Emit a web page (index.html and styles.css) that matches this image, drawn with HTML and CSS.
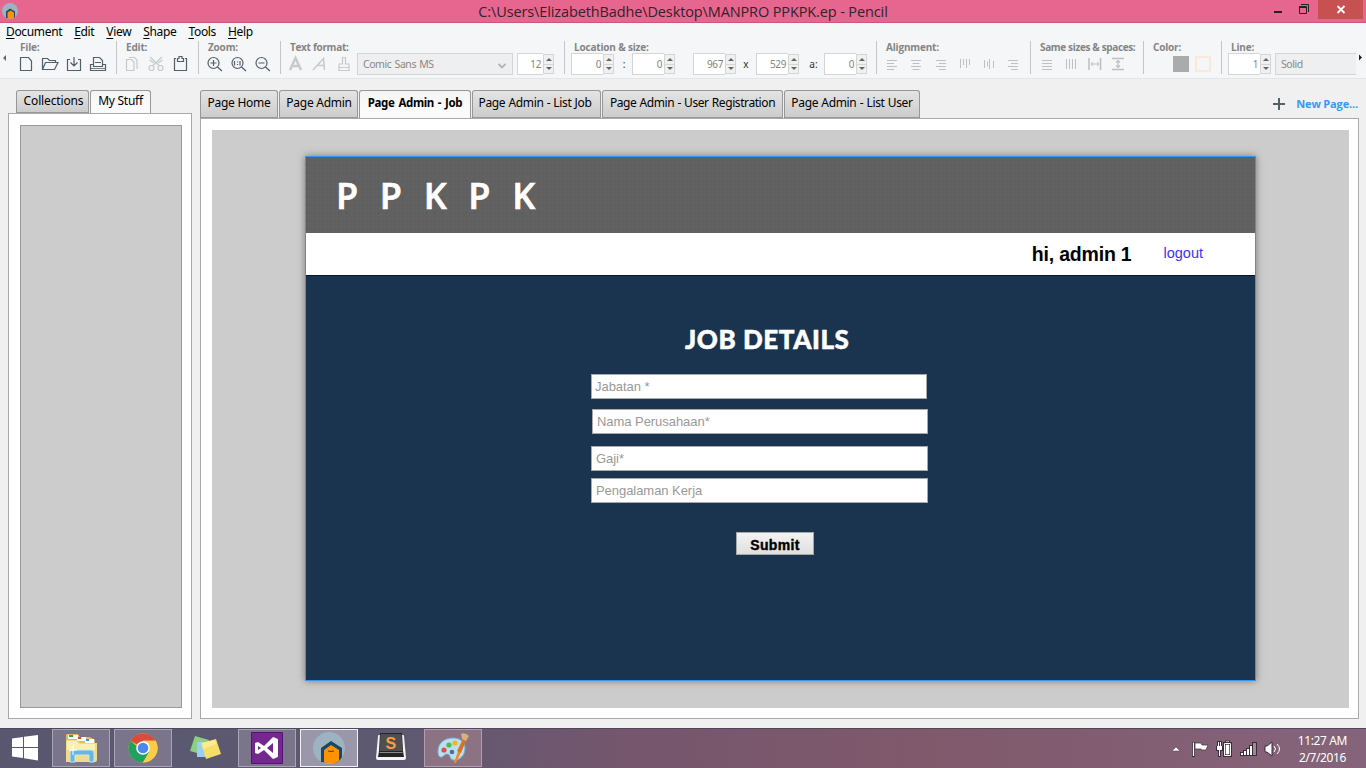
FILE: index.html
```
<!DOCTYPE html>
<html lang="en">
<head>
<meta charset="utf-8">
<title>Pencil</title>
<link rel="stylesheet" href="styles.css">
</head>
<body>
<div class="desktop">
<header class="titlebar">
  <svg class="app-icon" viewBox="0 0 32 32"><circle cx="16" cy="16" r="16" fill="#9db3c2"/><path d="M8 30V17l8-6 10 6v12" fill="#174868"/><path d="M11 29V19l6-4 7 4v10q-6 5-13 0z" fill="#ff9200"/></svg>
  <h1 class="window-title">C:\Users\ElizabethBadhe\Desktop\MANPRO PPKPK.ep - Pencil</h1>
  <div class="win-buttons">
    <svg class="win-min" width="26" height="19" viewBox="0 0 26 19"><path d="M8 12h8" stroke="#222" stroke-width="2"/></svg>
    <svg class="win-max" width="26" height="19" viewBox="0 0 26 19"><path d="M7.500 6.500h7v7h-7zM7 7.500h8M9 4.500h7.500V12" fill="none" stroke="#222"/></svg>
    <span class="win-close"><svg width="45" height="19" viewBox="0 0 45 19"><path d="M19.500 6l7 7M26.500 6l-7 7" stroke="#fff" stroke-width="1.800"/></svg></span>
  </div>
</header>
<nav class="menubar"><span><u>D</u>ocument</span><span><u>E</u>dit</span><span><u>V</u>iew</span><span><u>S</u>hape</span><span><u>T</u>ools</span><span><u>H</u>elp</span></nav>
<section class="toolbar">
  <svg class="scroll-arrow" width="8" height="33" viewBox="0 0 8 33"><path d="M6 14v6l-3-3z" fill="#666"/></svg>
  <div class="group g-file"><b>File:</b><div class="row">
    <svg class="ic"><path d="M6.500 5.500h8l3 3.500v9.500h-11z"/></svg>
    <svg class="ic"><path d="M4.500 17V6.500h5l2 2h6v2M4.500 17.500l3-7h12.500l-3.500 7z"/></svg>
    <svg class="ic"><path d="M8 7.500H5.500v11h13v-11H16M12 5v9M8.500 10.500L12 14l3.500-3.500"/></svg>
    <svg class="ic"><path d="M7.500 13V5.500h6l3 3V13M9 10.500h6M4.500 18.500v-6h3v2h9v-2h3v6z"/><path d="M5 16.500h14" stroke-width=".8"/></svg>
  </div></div>
  <div class="group g-edit"><b>Edit:</b><div class="row">
    <svg class="ic dim"><path d="M6.500 7.500h5l2.500 2.500v8.500H6.500zM9 5.500h5.500l2.500 2.500V17"/></svg>
    <svg class="ic dim"><path d="M6 5l9.500 9M18 5l-9.500 9M5.500 8l4.500 3M18.500 8l-4.500 3"/><circle cx="7.500" cy="16" r="2.500"/><circle cx="16.500" cy="16" r="2.500"/></svg>
    <svg class="ic"><path d="M8 6.500H6.500v12h12v-12H17M9.500 9.500h6v-3h-1.500V4.500h-3v2H9.500z"/></svg>
  </div></div>
  <div class="group g-zoom"><b>Zoom:</b><div class="row">
    <svg class="ic"><circle cx="10.500" cy="11" r="5.500"/><path d="M14.500 15l4.500 4M7.500 11h6M10.500 8v6"/></svg>
    <svg class="ic"><circle cx="10.500" cy="11" r="5.500"/><path d="M14.500 15l4.500 4M7.500 9v4.500M13 9v4.500M10.500 9.500v1M10.500 12v1"/></svg>
    <svg class="ic"><circle cx="10.500" cy="11" r="5.500"/><path d="M14.500 15l4.500 4M7.500 11h6"/></svg>
  </div></div>
  <div class="group g-text"><b>Text format:</b><div class="row">
    <svg class="ic dim"><path d="M6 18l5.500-12L17 18M8.500 14h6" stroke-width="2.500"/></svg>
    <svg class="ic dim"><path d="M5 18L15.500 6.500 16.500 18M10 13.500h6.500" stroke-width="1.500"/></svg>
    <svg class="ic dim"><path d="M10.500 12V5.500h3V12h3.500v6.500H7V12zM7 15.500h10"/></svg>
    <div class="select font-select">Comic Sans MS<svg width="10" height="8" viewBox="0 0 10 8"><path d="M1.500 2l3.500 3.500L8.500 2" fill="none" stroke="#b4b4b4" stroke-width="1.800"/></svg></div>
    <div class="spin size-spin"><span>12</span><i></i></div>
  </div></div>
  <div class="group g-loc"><b>Location &amp; size:</b><div class="row">
    <div class="spin"><span>0</span><i></i></div><em class="colon">:</em>
    <div class="spin"><span>0</span><i></i></div>
    <div class="spin w-spin"><span>967</span><i></i></div><em class="times">x</em>
    <div class="spin"><span>529</span><i></i></div><em class="angle">a:</em>
    <div class="spin"><span>0</span><i></i></div>
  </div></div>
  <div class="group g-align"><b>Alignment:</b><div class="row">
    <svg class="ic pale"><path d="M7 8.500h10M7 11.500h7M7 14.500h10M7 17.500h7"/></svg>
    <svg class="ic pale"><path d="M7 8.500h10M8.500 11.500h7M7 14.500h10M8.500 17.500h7"/></svg>
    <svg class="ic pale"><path d="M8 8.500h10M11 11.500h7M8 14.500h10M11 17.500h7"/></svg>
    <svg class="ic pale"><path d="M8.500 7v9M11.500 7v6M14.500 7v9M17.500 7v6"/></svg>
    <svg class="ic pale"><path d="M8.500 8v8M11.500 9.500v5M13.500 7v10M17.500 9v7"/></svg>
    <svg class="ic pale"><path d="M8 8.500h10M11 11.500h7M8 14.500h10M11 17.500h7"/></svg>
  </div></div>
  <div class="group g-same"><b>Same sizes &amp; spaces:</b><div class="row">
    <svg class="ic pale"><path d="M7 8.500h10M7 11.500h10M7 14.500h10M7 17.500h10"/></svg>
    <svg class="ic pale"><path d="M7.500 7v10M10.500 7v10M13.500 7v10M16.500 7v10"/></svg>
    <svg class="ic pale"><path d="M6 6v12M17.500 6v12" stroke-width="1.600"/><path d="M8 12h8M10 10l-2 2 2 2M14 10l2 2-2 2"/></svg>
    <svg class="ic pale"><path d="M5 6.500h12M5 17.500h12" stroke-width="1.600"/><path d="M11 8v8M9 10.500l2-2 2 2M9 13.500l2 2 2-2" stroke-width="1.200"/></svg>
  </div></div>
  <div class="group g-color"><b>Color:</b><div class="row"><span class="swatch fill"></span><span class="swatch stroke"></span></div></div>
  <div class="group g-line"><b>Line:</b><div class="row"><div class="spin"><span>1</span><i></i></div><div class="select line-select">Solid</div></div></div>
  <svg class="scroll-arrow" width="8" height="33" viewBox="0 0 8 33"><path d="M1 13.500v6l3-3z" fill="#222"/></svg>
</section>
<main class="workspace">
  <aside class="sidebar">
    <div class="tabs"><span class="tab t-coll">Collections</span><span class="tab t-stuff on">My Stuff</span></div>
    <div class="panel"><div class="shape-list"></div></div>
  </aside>
  <section class="editor">
    <div class="tabs">
      <span class="tab p1">Page Home</span><span class="tab p2">Page Admin</span><span class="tab p3 on">Page Admin - Job</span><span class="tab p4">Page Admin - List Job</span><span class="tab p5">Page Admin - User Registration</span><span class="tab p6">Page Admin - List User</span>
      <span class="new-page"><svg width="12" height="12" viewBox="0 0 12 12"><path d="M6 0v12M0 6h12" stroke="#52606a" stroke-width="2"/></svg><span>New Page...</span></span>
    </div>
    <div class="panel"><div class="canvas"><article class="page">
      <header class="page-head">PPKPK</header>
      <div class="userbar"><strong>hi, admin 1</strong><a>logout</a></div>
      <form class="job-form">
        <h2>JOB DETAILS</h2>
        <div class="field f1">Jabatan *</div>
        <div class="field f2">Nama Perusahaan*</div>
        <div class="field f3">Gaji*</div>
        <div class="field f4">Pengalaman Kerja</div>
        <div class="submit">Submit</div>
      </form>
    </article></div></div>
  </section>
</main>
<footer class="taskbar">
  <div class="task start"><svg width="28" height="28" viewBox="0 0 28 28"><path d="M1 4.500l11-1.500V13H1zM13 2.800L27 1v12H13zM1 14h11v10L1 22.500zM13 14h14v12.500l-14-2.300z" fill="#fff"/></svg></div>
  <div class="task open"><svg width="36" height="34" viewBox="0 0 36 34"><path d="M3 9V4q0-1 1-1h11l2 3h10l5 3v21H3z" fill="#d8bd63"/><path d="M5 4h10v4H5z" fill="#fff"/><path d="M6 4h4v2H6z" fill="#1fae3c"/><path d="M14 6h9v4h-9z" fill="#fff"/><path d="M15 6h3v2h-3z" fill="#d8452c"/><path d="M22 8h9v4h-9z" fill="#fff"/><path d="M23 8h3v2h-3z" fill="#3199e8"/><path d="M3 9h11l3 3h17v17q0 2-2 2H3z" fill="#f0db88"/><path d="M4 10h9l3 3h16v6H4z" fill="#fbf0b0"/><path d="M7 31V22q0-3 3-3h18q3 0 3 3v9h-5v-7H12v7z" fill="#69b5dd" stroke="#c3e9f9"/><path d="M10 14v10M6 19h8" stroke="#fff"/></svg></div>
  <div class="task open"><svg width="30" height="30" viewBox="0 0 30 30"><circle cx="15" cy="15" r="14.500" fill="#f8c63e"/><path d="M15 15L2.400 7.700A14.500 14.500 0 0 1 27.600 7.700H15z" fill="#d94b3d"/><path d="M2.400 7.700A14.500 14.500 0 0 0 15 29.500l6.300-10.900H15z" fill="#20a15f"/><path d="M27.600 7.700H15v7.300l6.300 3.600L15 29.500A14.500 14.500 0 0 0 27.600 7.700z" fill="#fccb47"/><circle cx="15" cy="15" r="6.800" fill="#fff"/><circle cx="15" cy="15" r="5.300" fill="#4a87ee"/></svg></div>
  <div class="task"><svg width="34" height="28" viewBox="0 0 34 28"><path d="M7 2l14 4-5 15-14-4z" fill="#8bcf87"/><path d="M9 8h13v15H9z" fill="#98cff6"/><path d="M13 9l15-4 5 15-15 5z" fill="#f5df67"/><path d="M14 9l13-3 1 4-13 5z" fill="#fbeb91"/></svg></div>
  <div class="task open"><svg width="32" height="32" viewBox="0 0 32 32"><path d="M.5.500h31v31H.500z" fill="#74278f" stroke="#551370"/><path d="M4 11l3-1 6 4 9-9 5 2v18l-5 2-9-9-6 4-3-1zM22 11l-6 5 6 5zM7 14v4l3-2z" fill="#fff" fill-rule="evenodd"/></svg></div>
  <div class="task open active"><svg width="32" height="32" viewBox="0 0 32 32"><circle cx="16" cy="16" r="16" fill="#9db3c2"/><path d="M8 30V16l10-7 11 7v9q-4 7-10 6z" fill="#174868"/><path d="M11 30V18l7-5 8 5v11q-7 5-15 1z" fill="#ff9200"/><path d="M15 19q3 1 6 0" fill="none" stroke="#174868"/></svg></div>
  <div class="task"><svg class="key" width="32" height="28" viewBox="0 0 32 28"><path d="M3 3q0-1 1-1h24q1 0 1 1l2 22q0 2-2 2H3q-2 0-2-2z" fill="#f4f4f4"/><path d="M5 0h22l1 18 1 6H3l1-6z" fill="#242424"/><path d="M5.500 1h21l1 17H4.500z" fill="#4f4f4f"/><path d="M4.500 19.500h23" stroke="#8a8a8a"/><text x="10.500" y="16" class="sublime">S</text></svg></div>
  <div class="task open warm"><svg width="34" height="32" viewBox="0 0 34 32"><path d="M2 19C2 10 10 6 17 6c7 0 12 4 12 10 0 8-6 13-12 12-4-1-2-6-6-6-3 0-4 4-7 3-2-1-2-4-2-6z" fill="#b9dff3" stroke="#78afd0"/><circle cx="8" cy="18" r="2.600" fill="#e74d47"/><circle cx="13" cy="13" r="2.600" fill="#52b749"/><circle cx="19" cy="11" r="2.600" fill="#f3b526"/><circle cx="16" cy="20" r="2.300" fill="#50708d"/><path d="M18 31l4-12 3 1-5 11z" fill="#f18a26"/><path d="M21 19l6-12 3 2-5 12z" fill="#d87324"/><path d="M25 2q4-2 8 2l-3 5-4-2z" fill="#d5b27a"/></svg></div>
  <div class="tray">
    <svg width="112" height="20" viewBox="0 0 112 20"><path d="M1 12l4-4 4 4z" fill="#fff" stroke="#544052" stroke-width=".5"/>
    <path d="M22.500 3v15" stroke="#3d2b3b" stroke-width="3"/><path d="M22.500 3.500v13.500" stroke="#fff" stroke-width="1.300"/>
    <path d="M24 4h6l1 2h6l-2 5h-4l-1-1h-6z" fill="#fff" stroke="#3d2b3b" stroke-width=".7"/>
    <path d="M46 2v5h-1v5h2v6h3v-6h2V7h-1V2z" fill="#3d2b3b"/><path d="M47 3h1v4h1V3h1v4h1v4h-2v6h-1v-6h-2V7h1z" fill="#fff"/>
    <path d="M52 3h2V1.500h5V3h2v15h-9z" fill="#3d2b3b"/><path d="M53.500 4.500h6v12h-6z" fill="none" stroke="#fff"/><path d="M55 2.500h3M55 6h3v9h-3z" fill="#fff" stroke="#fff" stroke-width=".6"/>
    <path d="M69 17v-4h3v-2h3V9h3V6h3V3h5v14z" fill="#3d2b3b"/><path d="M70 14h2v2h-2zM73 12h2v4h-2zM76 10h2v6h-2zM79 7h2v9h-2z" fill="#fff"/><path d="M82 4h3v12h-3z" fill="#9c8a98"/>
    <path d="M94 7h2l5-4v14l-5-4h-2z" fill="#fff" stroke="#3d2b3b"/><path d="M103 7q3 3 0 6M106 5q5 5 0 10" fill="none" stroke="#fff"/></svg>
    <div class="clock">11:27 AM<br>2/7/2016</div>
  </div>
</footer>
</div>
</body>
</html>
```
FILE: styles.css
```
* { box-sizing: border-box; }
body { margin: 0; overflow: hidden; background: #f0f0f0; font-family: "Noto Sans", "Open Sans", sans-serif; color: #000; }
h1, h2 { margin: 0; }
svg { display: block; flex: none; }
.desktop { width: 1366px; height: 768px; display: flex; flex-direction: column; }

.titlebar { height: 23px; flex: none; display: grid; grid-template-columns: 140px 1fr 140px; background: #e7668f; border-bottom: 1px solid #c9587b; }
.app-icon { width: 16px; height: 16px; margin: 3px 0 0 2px; }
.window-title { font: 400 14.5px/23px "Open Sans", sans-serif; text-align: center; color: #33222a; white-space: nowrap; letter-spacing: -.12px; }
.win-buttons { display: flex; justify-content: flex-end; padding-right: 3px; }
.win-close { height: 19px; background: #c75050; }

.menubar { height: 18px; flex: none; display: flex; gap: 12px; padding-left: 6px; background: #f5f6f8; font: 12px/18px "Noto Sans", sans-serif; letter-spacing: -.34px; }
.menubar u { text-underline-offset: 2px; }

.toolbar { height: 38px; flex: none; display: flex; background: #f5f6f8; border-bottom: 1px solid #e3e6e9; }
.group { height: 33px; flex: none; border-right: 1px solid #c3c6c8; color: #858585; }
.group b { display: block; height: 12px; font: 700 10px/13px "Open Sans", sans-serif; letter-spacing: -.18px; white-space: nowrap; }
.row { display: flex; height: 22px; align-items: center; }
.g-file { width: 109px; } .g-file b { margin-left: 12px; } .g-file .row { padding-left: 6px; }
.g-edit { width: 82px; } .g-edit b { margin-left: 9px; } .g-edit .row { padding-left: 3px; }
.g-zoom { width: 82px; } .g-zoom b { margin-left: 9px; } .g-zoom .row { padding-left: 4px; }
.g-text { width: 284px; } .g-text b { margin-left: 9px; letter-spacing: -.3px; } .g-text .row { padding-left: 3px; }
.g-loc { width: 312px; } .g-loc b { margin-left: 9px; } .g-loc .row { padding-left: 6px; }
.g-align { width: 154px; } .g-align b { margin-left: 9px; } .g-align .row { padding-left: 3px; }
.g-same { width: 113px; } .g-same b { margin-left: 9px; letter-spacing: -.36px; } .g-same .row { padding-left: 4px; }
.g-color { width: 78px; } .g-color b { margin-left: 9px; } .g-color .row { padding-left: 29px; gap: 6px; }
.g-line { width: 136px; border-right: 0; } .g-line b { margin-left: 9px; } .g-line .row { padding-left: 6px; }
.ic { width: 24px; height: 24px; fill: none; stroke: #52606a; stroke-width: 1.2; }
.dim { stroke: #c8c9ca; }
.pale { stroke: #bfc0c2; stroke-width: 1; }
.select { height: 22px; display: flex; align-items: center; justify-content: space-between; padding: 0 5px; border: 1px solid #d5d5d5; background: #efefef; color: #888; font: 10.5px "Noto Sans", sans-serif; letter-spacing: -.45px; word-spacing: 1px; }
.font-select { width: 156px; margin-left: 1px; }
.font-select svg { margin-top: 3px; }
.line-select { width: 81px; margin-left: 4px; border-right: 0; }
.spin { width: 38px; height: 22px; flex: none; display: flex; }
.spin span { width: 26px; padding-right: 2px; border: 1px solid #d5d5d5; border-right: 0; background: #fff; text-align: right; font: 10px/20px "Noto Sans", sans-serif; letter-spacing: -.4px; }
.g-loc .spin, .g-line .spin { width: 43px; }
.g-loc .spin span, .g-line .spin span { width: 32px; }
.spin i { width: 11px; height: 20px; margin-top: 1px; border: 1px solid #d5d5d5; background: linear-gradient(#d5d5d5, #d5d5d5) 0 9px / 9px 1px no-repeat, #f0f0f0; display: flex; flex-direction: column; align-items: center; justify-content: space-between; padding: 3px 0; }
.spin i::before { content: ""; border: 3px solid transparent; border-top: 0; border-bottom: 3px solid #666; }
.spin i::after { content: ""; border: 3px solid transparent; border-bottom: 0; border-top: 3px solid #666; }
.size-spin { margin-left: 4px; }
.w-spin { margin-left: 18px; }
.row em { font: 10px "Noto Sans", sans-serif; color: #333; text-align: center; }
.colon { width: 18px; padding-left: 2px; } .times { width: 20px; } .angle { width: 25px; padding-left: 4px; }
.swatch { width: 16px; height: 16px; }
.fill { background: #aaabab; }
.stroke { border: 2px solid #fae8d9; }

.workspace { height: 649px; flex: none; display: flex; gap: 8px; padding: 11px 7px 9px 8px; }
.sidebar { width: 184px; display: flex; flex-direction: column; }
.editor { flex: 1; display: flex; flex-direction: column; }
.tabs { display: flex; gap: 1px; height: 28px; flex: none; }
.sidebar .tabs { height: 23px; padding-left: 8px; }
.tab { border: 1px solid #979797; border-bottom: 0; border-radius: 3px 3px 0 0; background: linear-gradient(#e4e4e4, #cbcbcb); font: 12px/23px "Noto Sans", sans-serif; letter-spacing: -.27px; text-align: center; white-space: nowrap; box-shadow: inset 0 -1px #999; }
.sidebar .tab { line-height: 20px; letter-spacing: -.15px; }
.sidebar .tab.on { letter-spacing: -.25px; }
.tab.on { background: linear-gradient(#f4f4f4, #fafafa 60%); box-shadow: none; }
.t-coll { width: 73px; padding-left: 2px; } .t-stuff { width: 61px; }
.p1 { width: 78px; } .p2 { width: 79px; padding-left: 1px; } .p3 { width: 112px; font-weight: 700; font-size: 11.5px; letter-spacing: -.35px; word-spacing: 1.2px; } .p4 { width: 129px; letter-spacing: -.35px; word-spacing: .4px; padding-right: 3px; } .p5 { width: 181px; letter-spacing: -.42px; word-spacing: .5px; } .p6 { width: 136px; letter-spacing: -.35px; word-spacing: .5px; }
.new-page { margin-left: auto; padding-right: 1px; height: 27px; display: flex; align-items: center; gap: 11px; color: #3399ff; font: 700 11px "Open Sans", sans-serif; letter-spacing: -.15px; }
.panel { flex: 1; border: 1px solid #aaa; background: #fff; padding: 11px 9px 10px 11px; display: flex; }
.shape-list { flex: 1; background: #ccc; border: 1px solid #999; }
.canvas { flex: 1; background: #ccc; padding: 26px 0 0 93px; }
.page { width: 951px; height: 525px; border: 1px solid #3b94ee; background: #1a344f; box-shadow: 0 0 7px #777; }
.page-head { height: 76px; padding-left: 30px; background: conic-gradient(from 270deg at 1px 2px, #555 90deg, transparent 0) 0 7px / 8px 8px, #616161; color: #fff; font: 600 36px/77px "Open Sans", sans-serif; letter-spacing: 21.700px; -webkit-text-stroke: .7px #fff; }
.userbar { height: 43px; background: #fff; border-bottom: 1px solid #09162a; display: flex; justify-content: flex-end; padding-right: 52px; gap: 32px; font-family: "Liberation Sans", sans-serif; line-height: 42px; }
.userbar strong { font-size: 19.500px; letter-spacing: -.2px; }
.userbar a { color: #3c32ef; font-size: 14.500px; line-height: 40px; }
.job-form { display: flex; flex-direction: column; align-items: flex-start; padding: 47px 0 0 285px; }
.job-form h2 { height: 32px; margin: 0 0 19px 94px; font: 900 26px/33px Lato, sans-serif; color: #fff; letter-spacing: .55px; -webkit-text-stroke: .5px #fff; }
.field { width: 337px; height: 25px; padding-left: 4px; border: 1px solid #a9a9a9; background: #fff; color: #999; font: 13px/23px "Liberation Sans", sans-serif; letter-spacing: -.05px; }
.f1 { width: 336px; padding-left: 3px; } .f2 { width: 336px; margin: 10px 0 0 1px; } .f3 { margin-top: 12px; } .f4 { margin-top: 7px; }
.submit { width: 78px; height: 23px; margin: 29px 0 0 145px; border: 1px solid #a7a7a7; background: linear-gradient(#f2f2f2, #e0e0e0); text-align: center; font: 700 14px/25px "Liberation Sans", sans-serif; letter-spacing: .35px; -webkit-text-stroke: .4px #000; }

.taskbar { height: 40px; flex: none; display: flex; gap: 4px; padding-top: 1px; background: linear-gradient(90deg, #595770, #5d5971 29%, #75566d 46%, #80596b 68%, #85647b 100%); box-shadow: inset 0 1px #4f485c; }
.task { width: 58px; height: 38px; display: flex; align-items: center; justify-content: center; border: 1px solid transparent; }
.start { width: 48px; padding-left: 2px; }
.open { background: #7a758a; border-color: #a9a5b4; }
.active { background: #9997a9; border-color: #f2f2f5; }
.warm { background: #8c7384; border-color: #b19dab; }
.key { margin-bottom: 2px; }
.sublime { font: 700 16px "Liberation Sans", sans-serif; fill: #ff9c3d; }
.tray { margin-left: auto; display: flex; align-items: center; gap: 15px; padding-right: 19px; color: #fff; }
.clock { font: 12px/17px "Noto Sans", sans-serif; text-align: center; letter-spacing: -.4px; white-space: nowrap; }
```
